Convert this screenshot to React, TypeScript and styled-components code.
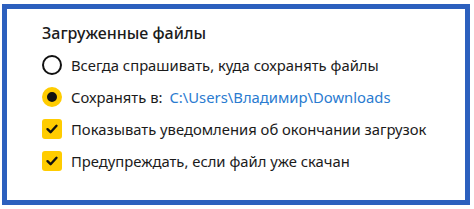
import React from "react";
import styled, { createGlobalStyle } from "styled-components";

const Global = createGlobalStyle`
  html, body { margin: 0; padding: 0; background: #ffffff; }
  body { font-family: "Noto Sans", "Open Sans", sans-serif; }
`;

const Frame = styled.div`
  box-sizing: border-box;
  margin: 4px 0 0 2px;
  width: 468px;
  height: 201px;
  border: 5px solid #2c60be;
  background: #ffffff;
  padding: 8px 0 0 35px;
  display: flex;
  flex-direction: column;
`;

const Title = styled.div`
  height: 32px;
  line-height: 32px;
  font-size: 16px;
  font-weight: 500;
  color: #1b1b1b;
`;

const Row = styled.div`
  height: 32px;
  display: flex;
  align-items: center;
  gap: 9px;
  font-size: 14.8px;
  color: #1b1b1b;
`;

const Radio = styled.span<{ $checked?: boolean }>`
  box-sizing: border-box;
  width: 20px;
  height: 20px;
  border-radius: 50%;
  flex: none;
  border: ${(p) => (p.$checked ? "5px solid #ffcc00" : "2.5px solid #111111")};
  background: ${(p) => (p.$checked ? "#111111" : "#ffffff")};
`;

const Check = styled.span`
  width: 20px;
  height: 20px;
  border-radius: 3px;
  background: #ffcc00;
  flex: none;
  display: flex;
  align-items: center;
  justify-content: center;
`;

const Link = styled.span`
  color: #2a7bd0;
  margin-left: 7px;
`;

const CheckMark = () => (
  <svg width="14" height="14" viewBox="0 0 14 14">
    <path d="M2.5 7.2 L5.6 10.2 L11.5 3.8" fill="none" stroke="#111" strokeWidth="2.4" strokeLinecap="round" strokeLinejoin="round" />
  </svg>
);

export default function App() {
  return (
    <>
      <Global />
      <Frame>
        <Title>Загруженные файлы</Title>
        <Row>
          <Radio />
          <span>Всегда спрашивать, куда сохранять файлы</span>
        </Row>
        <Row>
          <Radio $checked />
          <span>
            Сохранять в:<Link>C:\Users\Владимир\Downloads</Link>
          </span>
        </Row>
        <Row>
          <Check>
            <CheckMark />
          </Check>
          <span>Показывать уведомления об окончании загрузок</span>
        </Row>
        <Row>
          <Check>
            <CheckMark />
          </Check>
          <span>Предупреждать, если файл уже скачан</span>
        </Row>
      </Frame>
    </>
  );
}
